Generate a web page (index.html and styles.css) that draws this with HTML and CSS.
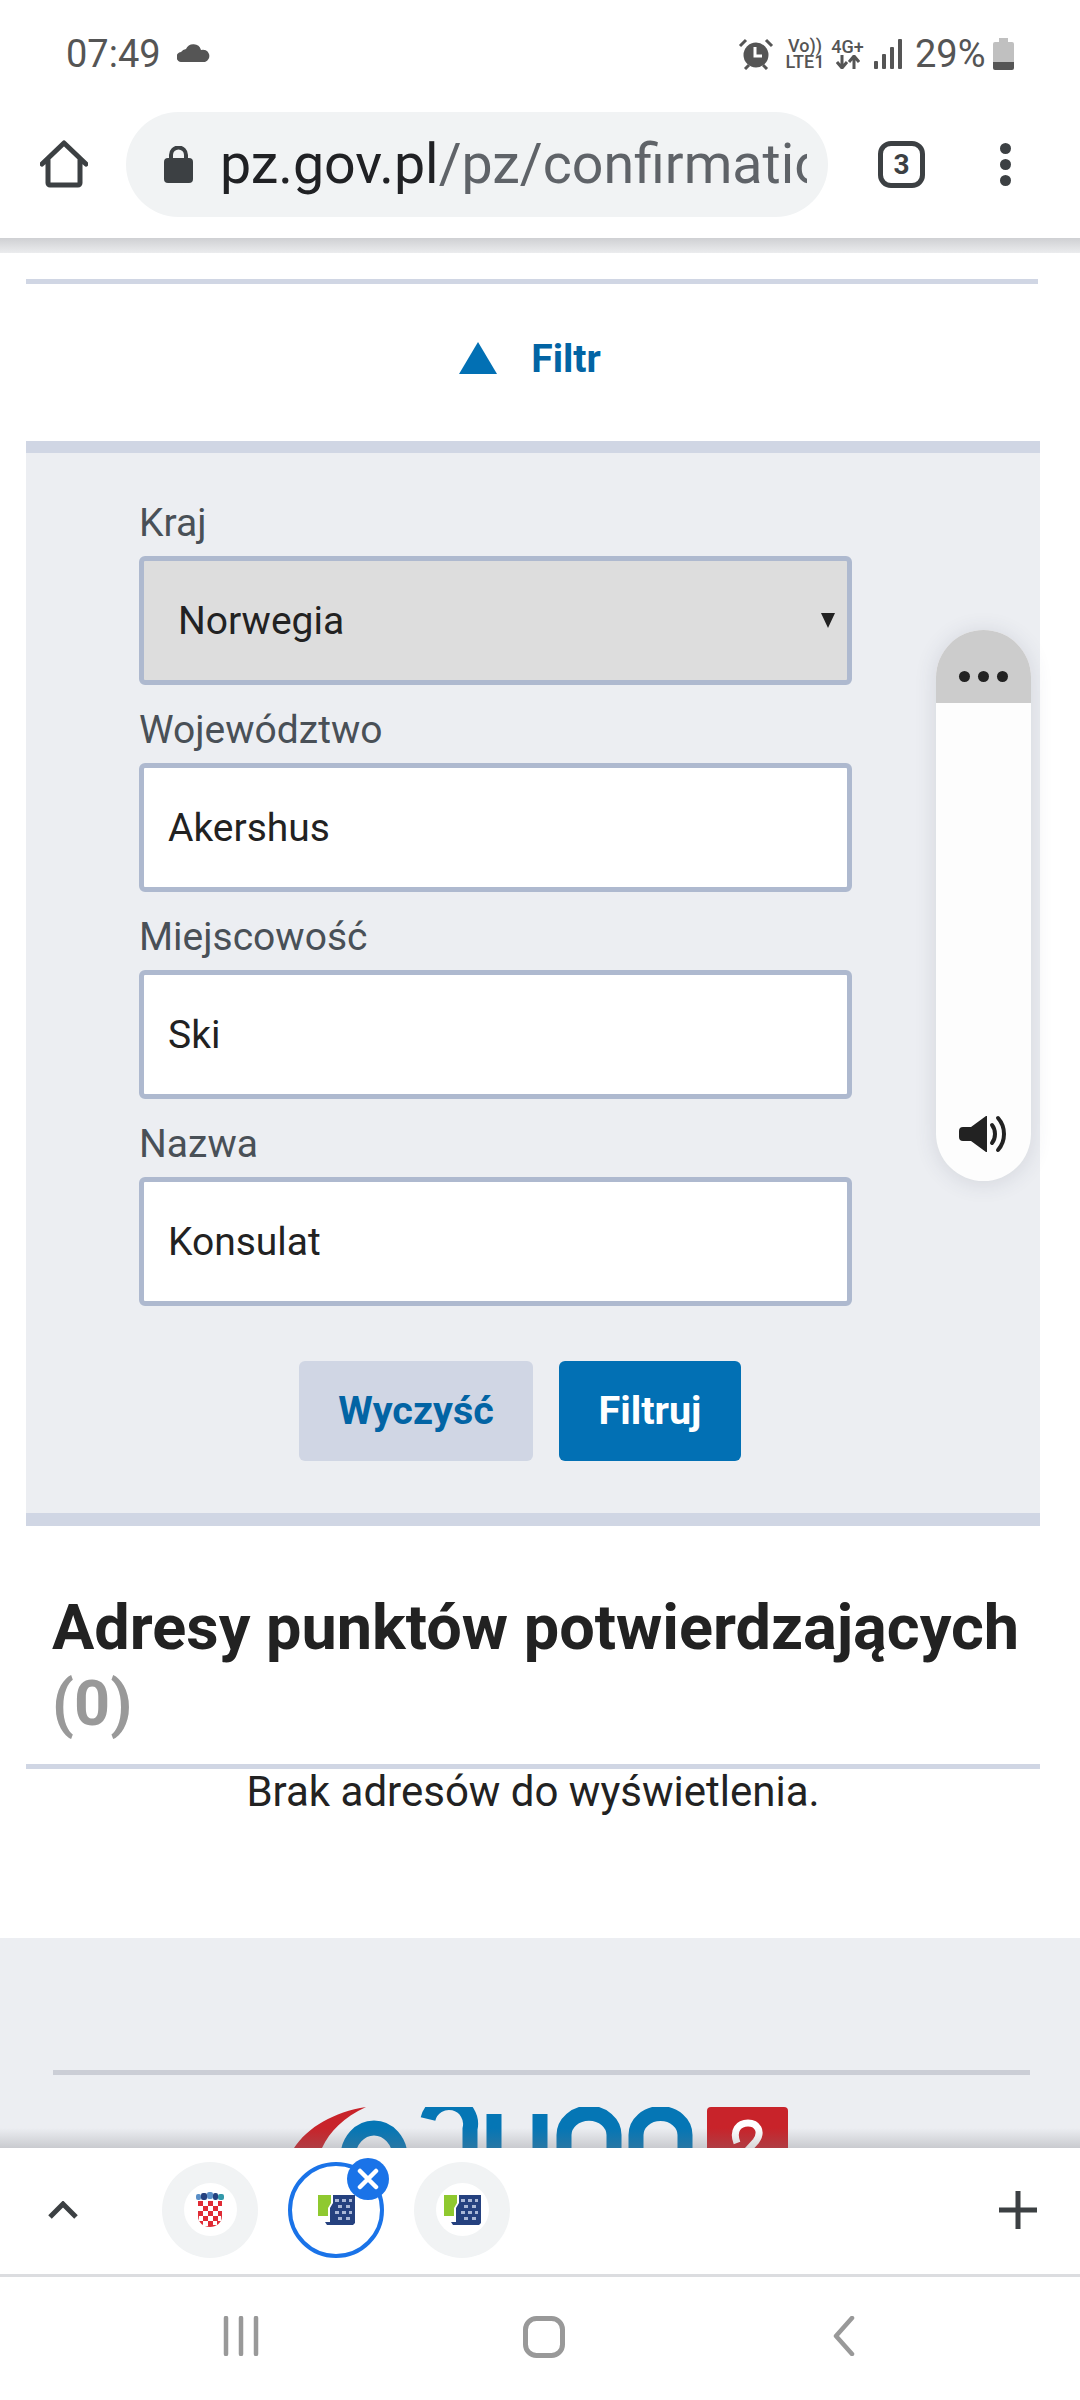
FILE: index.html
```html
<!doctype html>
<html>
<head>
  <meta charset="utf-8">
  <title>Adresy punktów potwierdzających</title>
  <link rel="stylesheet" href="styles.css">
</head>
<body>
  <svg class="defs" width="0" height="0">
    <symbol id="gov-icon" viewBox="0 0 37 30">
      <path d="M0 0h13v8l-3 5v8H0z" fill="#8fc92f"/>
      <path d="M10 0h27v28l-2 2H9l-2-3h5V13l3-5V0z" fill="#25417f"/>
      <g fill="#a9b7d6">
        <rect x="17" y="4" width="4" height="3"/><rect x="24" y="4" width="4" height="3"/><rect x="31" y="4" width="3" height="3"/>
        <rect x="20" y="10" width="4" height="3"/><rect x="28" y="10" width="4" height="3"/>
        <rect x="17" y="16" width="4" height="3"/><rect x="24" y="16" width="4" height="3"/><rect x="31" y="16" width="3" height="3"/>
        <rect x="20" y="22" width="4" height="3"/><rect x="28" y="22" width="4" height="3"/>
      </g>
    </symbol>
  </svg>

  <div class="screen">
    <div class="status-bar">
      <div class="status-left">
        <span class="clock">07:49</span>
        <svg class="cloud" width="33" height="19" viewBox="0 0 33 19"><path d="M5 19a5 5 0 0 1-1-10 7 7 0 0 1 5-3A8 8 0 0 1 24 7a6 6 0 0 1 4 12z" fill="#555"/></svg>
      </div>
      <div class="status-right">
        <svg class="alarm" width="36" height="32" viewBox="0 0 36 32"><circle cx="18" cy="17" r="12.5" fill="#555"/><path d="M17 9v9h7" fill="none" stroke="#fff" stroke-width="3"/><path d="M2 8l6-6M34 8l-6-6M7 31l4-4M29 31l-4-4" stroke="#555" stroke-width="3"/></svg>
        <div class="net-col net-lte"><span>Vo))</span><span>LTE1</span></div>
        <div class="net-col net-4g"><span>4G+</span>
          <svg width="24" height="14" viewBox="0 0 24 14"><path d="M6 0v12M1 7l5 6 5-6M18 14V2M13 7l5-6 5 6" fill="none" stroke="#555" stroke-width="3"/></svg>
        </div>
        <svg class="signal" width="28" height="30" viewBox="0 0 28 30"><g fill="#555"><rect x="0" y="22" width="4" height="8" rx="1"/><rect x="8" y="15" width="4" height="15" rx="1"/><rect x="16" y="8" width="4" height="22" rx="1"/><rect x="24" y="0" width="4" height="30" rx="1"/></g></svg>
        <span class="percent">29%</span>
        <svg class="battery" width="21" height="32" viewBox="0 0 21 32"><path d="M6 0h9v4h4a2 2 0 0 1 2 2v18H0V6a2 2 0 0 1 2-2h4z" fill="#c0c0c0"/><path d="M0 24h21v6a2 2 0 0 1-2 2H2a2 2 0 0 1-2-2z" fill="#555"/></svg>
      </div>
    </div>

    <div class="toolbar">
      <svg class="home-icon" width="48" height="48" viewBox="0 0 48 48"><path d="M2 24L24 3l22 21M8 19v24a2 2 0 0 0 2 2h28a2 2 0 0 0 2-2V19" fill="none" stroke="#3c4043" stroke-width="5" stroke-linecap="round" stroke-linejoin="round"/></svg>
      <div class="url-pill">
        <svg class="lock" width="29" height="37" viewBox="0 0 29 37"><path d="M7 14V9a7.500 7.500 0 0 1 15 0v5" fill="none" stroke="#3c4043" stroke-width="4"/><rect x="0" y="12" width="29" height="25" rx="4" fill="#3c4043"/></svg>
        <span class="url"><span class="url-host">pz.gov.pl</span>/pz/confirmatio</span>
      </div>
      <div class="tab-count">3</div>
      <div class="menu-dots"><i></i><i></i><i></i></div>
    </div>

    <div class="content">
      <div class="top-rule"></div>
      <div class="filter-toggle">
        <span class="triangle"></span>
        <span class="filter-label">Filtr</span>
      </div>

      <div class="filter-panel">
        <div class="field">
          <label class="field-label">Kraj</label>
          <div class="field-box field-select">Norwegia<span class="select-arrow"></span></div>
        </div>
        <div class="field">
          <label class="field-label">Województwo</label>
          <div class="field-box">Akershus</div>
        </div>
        <div class="field">
          <label class="field-label">Miejscowość</label>
          <div class="field-box">Ski</div>
        </div>
        <div class="field">
          <label class="field-label">Nazwa</label>
          <div class="field-box">Konsulat</div>
        </div>
        <div class="buttons">
          <div class="btn btn-clear">Wyczyść</div>
          <div class="btn btn-filter">Filtruj</div>
        </div>
      </div>

      <h2 class="results-title">Adresy punktów potwierdzających <span class="results-count">(0)</span></h2>
      <div class="results-rule"></div>
      <p class="no-results">Brak adresów do wyświetlenia.</p>

      <div class="footer">
        <div class="footer-rule"></div>
        <svg class="footer-logo" width="495" height="60" viewBox="0 0 495 60">
          <path d="M0 41C14 20 40 5 72 0 50 10 36 24 28 41z" fill="#c8232a"/>
          <g fill="none" stroke="#0576b5" stroke-width="15">
            <path d="M54 50a26 29 0 0 1 52 0"/>
            <path d="M134 12a21 21 0 0 1 42 10v30"/>
            <path d="M200 7v50M246 7v50"/>
            <path d="M270 50V28a24 21 0 0 1 50 0v22"/>
            <path d="M342 50V28a24 21 0 0 1 49 0v22"/>
          </g>
          <rect x="413" y="0" width="81" height="60" rx="4" fill="#c8232a"/>
          <path d="M443 36c-5-13 2-20 11-20s15 8 8 18l-9 10" fill="none" stroke="#fff" stroke-width="7"/>
        </svg>
      </div>
    </div>

    <div class="bottom-shadow"></div>

    <div class="tab-strip">
      <svg class="chevron" width="32" height="18" viewBox="0 0 32 18"><path d="M3 16L16 3l13 13" fill="none" stroke="#3c4043" stroke-width="5"/></svg>
      <div class="tab-icons">
        <div class="tab-circle">
          <div class="favicon">
            <svg width="28" height="35" viewBox="0 0 28 35">
              <g fill="#5a8fc7"><rect x="0" y="2" width="5" height="6" rx="2"/><rect x="11" y="0" width="6" height="7" rx="2"/></g>
              <g fill="#25417f"><rect x="5" y="1" width="6" height="7" rx="2"/><rect x="17" y="1" width="5" height="7" rx="2"/></g>
              <rect x="22" y="2" width="6" height="6" rx="2" fill="#39a"/>
              <path d="M2 9h24v15c0 7-6 11-12 11S2 31 2 24z" fill="#e02b35"/>
              <g fill="#fff">
                <rect x="7" y="9" width="5" height="5"/><rect x="17" y="9" width="5" height="5"/>
                <rect x="2" y="14" width="5" height="5"/><rect x="12" y="14" width="5" height="5"/><rect x="22" y="14" width="4" height="5"/>
                <rect x="7" y="19" width="5" height="5"/><rect x="17" y="19" width="5" height="5"/>
                <rect x="3" y="24" width="4" height="5"/><rect x="12" y="24" width="5" height="5"/><rect x="22" y="24" width="3" height="5"/>
                <rect x="7" y="29" width="5" height="5"/><rect x="17" y="29" width="4" height="4"/>
              </g>
            </svg>
          </div>
        </div>
        <div class="tab-circle tab-active">
          <div class="favicon"><svg width="37" height="30"><use href="#gov-icon"/></svg></div>
          <div class="tab-close">
            <svg width="22" height="22" viewBox="0 0 22 22"><path d="M3 3l16 16M19 3L3 19" stroke="#fff" stroke-width="4.500" stroke-linecap="round"/></svg>
          </div>
        </div>
        <div class="tab-circle">
          <div class="favicon"><svg width="37" height="30"><use href="#gov-icon"/></svg></div>
        </div>
      </div>
      <svg class="plus" width="38" height="38" viewBox="0 0 38 38"><path d="M19 0v38M0 19h38" stroke="#3c4043" stroke-width="5"/></svg>
    </div>

    <div class="nav-bar">
      <svg width="36" height="40" viewBox="0 0 36 40"><path d="M3 2v36M18 2v36M33 2v36" stroke="#999" stroke-width="4.500" stroke-linecap="round"/></svg>
      <svg class="nav-home" width="42" height="42" viewBox="0 0 42 42"><rect x="2.500" y="2.500" width="37" height="37" rx="11" fill="none" stroke="#999" stroke-width="5"/></svg>
      <svg class="nav-back" width="24" height="40" viewBox="0 0 24 40"><path d="M21 2L5 20l16 18" fill="none" stroke="#999" stroke-width="4.500" stroke-linecap="round" stroke-linejoin="round"/></svg>
    </div>

    <!-- reader widget floating over the page -->
    <div class="reader">
      <div class="reader-head"><i></i><i></i><i></i></div>
      <div class="reader-body">
        <svg width="49" height="38" viewBox="0 0 49 38"><path d="M4 12h8L27 1h1v36h-1L12 26H4a4 4 0 0 1-4-4v-6a4 4 0 0 1 4-4z" fill="#222"/><path d="M33 10c4 5 4 13 0 18M39 3c8 9 8 23 0 32" fill="none" stroke="#222" stroke-width="4" stroke-linecap="round"/></svg>
      </div>
    </div>
  </div>
</body>
</html>
```

FILE: styles.css
```css
* {
  box-sizing: border-box;
}

html, body {
  margin: 0;
  padding: 0;
  background: #fff;
}

.defs {
  position: absolute;
}

.screen {
  position: relative;
  width: 1080px;
  height: 2400px;
  overflow: hidden;
  display: flex;
  flex-direction: column;
  font-family: Roboto, "Liberation Sans", sans-serif;
  color: #222;
}

/* Status bar */
.status-bar {
  height: 112px;
  flex: none;
  display: flex;
  justify-content: space-between;
  align-items: flex-start;
  padding: 32px 66px 0 66px;
  color: #555;
}
.status-left {
  display: flex;
  align-items: center;
  gap: 16px;
}
.clock {
  font-size: 38px;
  line-height: 44px;
}
.cloud {
  margin-top: -4px;
}
.status-right {
  display: flex;
  align-items: center;
  height: 44px;
}
.net-col {
  display: flex;
  flex-direction: column;
  align-items: center;
  font-size: 18px;
  line-height: 16px;
  font-weight: 500;
  white-space: nowrap;
}
.net-lte {
  width: 38px;
  margin-left: 12px;
}
.net-4g {
  width: 31px;
  margin-left: 8px;
}
.signal {
  margin-left: 11px;
}
.percent {
  width: 70px;
  margin-left: 13px;
  font-size: 38px;
  line-height: 44px;
}
.battery {
  margin-left: 8px;
}

/* Browser toolbar */
.toolbar {
  height: 126px;
  flex: none;
  display: flex;
  align-items: flex-start;
  padding-left: 40px;
  background: #fff;
}
.home-icon {
  margin-top: 28px;
}
.url-pill {
  width: 702px;
  height: 105px;
  margin-left: 38px;
  padding: 0 21px 0 38px;
  border-radius: 53px;
  background: #f1f3f4;
  display: flex;
  align-items: center;
  gap: 27px;
  overflow: hidden;
}
.lock {
  flex: none;
}
.url {
  font-size: 55.5px;
  white-space: nowrap;
  overflow: hidden;
  color: #5f6368;
}
.url-host {
  color: #202124;
}
.tab-count {
  width: 47px;
  height: 47px;
  margin: 29px 0 0 50px;
  border: 5px solid #3c4043;
  border-radius: 13px;
  font-size: 28px;
  font-weight: 700;
  line-height: 37px;
  text-align: center;
  color: #3c4043;
}
.menu-dots {
  margin: 31px 0 0 75px;
  display: flex;
  flex-direction: column;
  gap: 5px;
}
.menu-dots i {
  display: block;
  width: 11px;
  height: 11px;
  border-radius: 50%;
  background: #3c4043;
}

/* Page content */
.content {
  position: relative;
  flex: 1;
  min-height: 0;
  overflow: hidden;
  padding-top: 41px;
}
.content:before {
  content: "";
  position: absolute;
  left: 0;
  right: 0;
  top: 0;
  height: 15px;
  background: linear-gradient(#cfd0d3, #ebecee);
}
.top-rule {
  height: 5px;
  margin: 0 42px 0 26px;
  background: #d0d6e4;
}
.filter-toggle {
  height: 157px;
  display: flex;
  align-items: center;
  justify-content: center;
  gap: 34px;
  padding-bottom: 7px;
  margin-right: 20px;
}
.triangle {
  width: 0;
  height: 0;
  margin-top: -2px;
  border-left: 19px solid transparent;
  border-right: 19px solid transparent;
  border-bottom: 32px solid #0270b4;
}
.filter-label {
  font-size: 39px;
  font-weight: 700;
  color: #0264a4;
}

.filter-panel {
  margin: 0 40px 0 26px;
  padding: 48px 0 52px 113px;
  background: #eceef2;
  border-top: 12px solid #d0d6e4;
  border-bottom: 13px solid #d0d6e4;
}
.field {
  width: 713px;
  margin-bottom: 23px;
}
.field-label {
  display: block;
  font-size: 39px;
  line-height: 44px;
  margin-bottom: 11px;
  color: #495057;
}
.field-box {
  position: relative;
  height: 129px;
  padding-left: 24px;
  border: 5px solid #aeb9cf;
  border-radius: 6px;
  background: #fff;
  font-size: 39px;
  line-height: 121px;
  color: #222;
}
.field-select {
  padding-left: 34px;
  background: #ddd;
}
.select-arrow {
  position: absolute;
  right: 12px;
  top: 52px;
  width: 0;
  height: 0;
  border-left: 7px solid transparent;
  border-right: 7px solid transparent;
  border-top: 15px solid #222;
}
.buttons {
  width: 713px;
  margin-top: 55px;
  padding-left: 49px;
  display: flex;
  justify-content: center;
  gap: 26px;
}
.btn {
  height: 100px;
  border-radius: 6px;
  font-size: 39.5px;
  font-weight: 700;
  line-height: 100px;
  text-align: center;
}
.btn-clear {
  width: 234px;
  background: #d0d6e4;
  color: #0264a4;
}
.btn-filter {
  width: 182px;
  background: #0270b4;
  color: #fff;
}

.results-title {
  margin: 64px 0 0 0;
  padding: 0 40px 0 52px;
  font-size: 63px;
  line-height: 76px;
  font-weight: 700;
  color: #222;
}
.results-count {
  color: #999;
}
.results-rule {
  height: 5px;
  margin: 22px 40px 0 26px;
  background: #d0d6e4;
}
.no-results {
  margin: 0 40px 0 26px;
  height: 169px;
  font-size: 42px;
  line-height: 46px;
  text-align: center;
  color: #222;
}

.footer {
  height: 300px;
  padding: 132px 50px 0 53px;
  background: #eceef2;
}
.footer-rule {
  height: 5px;
  background: #cbced6;
}
.footer-logo {
  display: block;
  margin: 32px 0 0 241px;
}

/* Tab strip and navigation */
.bottom-shadow {
  position: absolute;
  left: 0;
  right: 0;
  top: 2128px;
  height: 20px;
  background: linear-gradient(rgba(120, 120, 125, 0), rgba(120, 120, 125, 0.3));
}
.tab-strip {
  position: relative;
  height: 129px;
  flex: none;
  display: flex;
  align-items: center;
  padding: 0 43px 0 47px;
  background: #fff;
  border-bottom: 3px solid #dcdde0;
}
.chevron {
  flex: none;
  margin-top: -3px;
}
.tab-icons {
  flex: 1;
  display: flex;
  gap: 30px;
  margin: -3px 0 0 83px;
}
.tab-circle {
  position: relative;
  width: 96px;
  height: 96px;
  border-radius: 50%;
  background: #f1f3f4;
  display: flex;
  align-items: center;
  justify-content: center;
}
.favicon {
  width: 53px;
  height: 53px;
  border-radius: 50%;
  background: #fff;
  display: flex;
  align-items: center;
  justify-content: center;
}
.tab-active {
  background: #fff;
  border: 4px solid #1a73e8;
}
.tab-close {
  position: absolute;
  top: -8px;
  right: -9px;
  width: 42px;
  height: 42px;
  border-radius: 50%;
  background: #1a73e8;
  display: flex;
  align-items: center;
  justify-content: center;
}
.plus {
  flex: none;
  margin-top: -3px;
}
.nav-bar {
  height: 123px;
  flex: none;
  display: flex;
  align-items: flex-start;
  padding: 39px 223px 0 223px;
  justify-content: space-between;
  background: #fff;
}
.nav-home {
  margin-left: -2px;
}
.nav-back {
  margin-right: 2px;
}

/* Floating reader widget */
.reader {
  position: absolute;
  left: 936px;
  top: 630px;
  width: 95px;
  height: 551px;
  border-radius: 48px;
  overflow: hidden;
  background: #fdfdfd;
  box-shadow: 0 2px 22px rgba(60, 64, 90, 0.14);
  display: flex;
  flex-direction: column;
}
.reader-head {
  height: 73px;
  flex: none;
  padding-top: 41px;
  background: #ccc;
  display: flex;
  justify-content: center;
  gap: 8px;
}
.reader-head i {
  width: 11px;
  height: 11px;
  border-radius: 50%;
  background: #222;
}
.reader-body {
  flex: 1;
  display: flex;
  align-items: flex-end;
  justify-content: center;
  padding-bottom: 28px;
}
```
